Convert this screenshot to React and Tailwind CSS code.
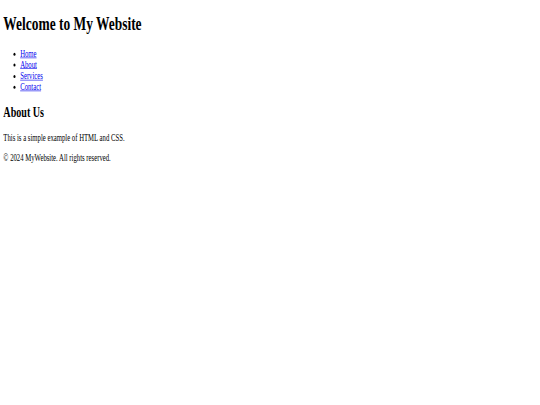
export default function App() {
  const links = ['Home', 'About', 'Services', 'Contact'];

  return (
    <div className="w-[540px] h-[405px] overflow-hidden bg-white">
      {/* page drawn at normal size, then squeezed to the screenshot's scale */}
      <div className="w-[1286px] h-[675px] origin-top-left scale-x-[0.42] scale-y-[0.6] px-2 pt-[21px] text-black text-base font-['Liberation_Serif',serif]">
        <h1 className="text-[32px] leading-[37px] font-bold mb-[23px]">Welcome to My Website</h1>
        <ul className="list-disc pl-10 leading-[18.4px] mb-[18px]">
          {links.map(l => (
            <li key={l}>
              <a href="#" className="text-[#0000ee] underline">{l}</a>
            </li>
          ))}
        </ul>
        <h2 className="text-2xl leading-[28px] font-bold mb-[20px]">About Us</h2>
        <p className="leading-[18.4px] mb-4">This is a simple example of HTML and CSS.</p>
        <p className="leading-[18.4px]">© 2024 MyWebsite. All rights reserved.</p>
      </div>
    </div>
  );
}
